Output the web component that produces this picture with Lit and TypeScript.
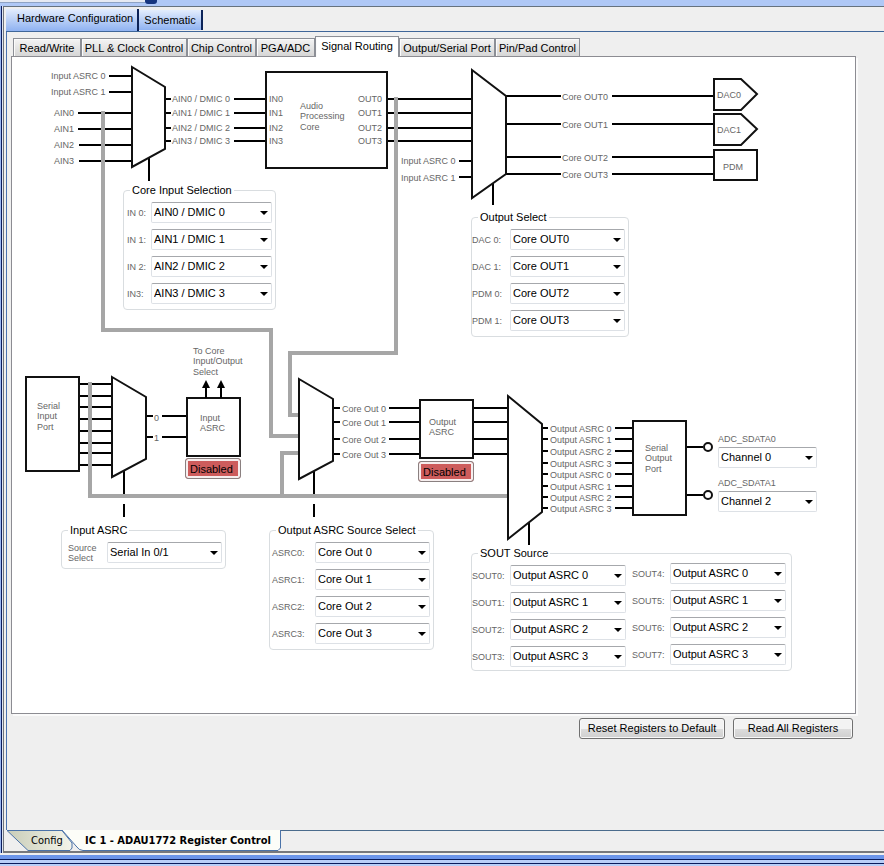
import { LitElement, html, svg, css } from "lit";
import { customElement, property, state } from "lit/decorators.js";
import { classMap } from "lit/directives/class-map.js";
import { styleMap } from "lit/directives/style-map.js";

type Wire = [number, number, number];
type Label = [number, number, string];

/* Drop-down with its caption, used in every register group. */
@customElement("reg-select")
class RegSelect extends LitElement {
  @property() label = "";
  @property({ type: Array }) options: string[] = [];
  @property({ type: Number }) index = 0;

  static styles = css`
    :host {
      display: block;
      font: 11px "Liberation Sans", Arial, sans-serif;
    }
    .row {
      display: grid;
      grid-template-columns: var(--label-width, 38px) minmax(0, 1fr);
      align-items: center;
    }
    :host(.stacked) .row {
      grid-template-columns: minmax(0, 1fr);
      row-gap: 2px;
    }
    label {
      font-size: 9px;
      line-height: 10px;
      color: #666;
    }
    :host(.stacked) label {
      line-height: 12px;
    }
    .box {
      position: relative;
      display: block;
    }
    select {
      appearance: none;
      display: block;
      box-sizing: border-box;
      width: 100%;
      height: 21px;
      margin: 0;
      padding: 0 18px 2px 2px;
      border: 1px solid #dde1e6;
      border-top-color: #a6a8ac;
      border-radius: 2px;
      background: #fff;
      color: #000;
      font: inherit;
    }
    .arrow {
      position: absolute;
      right: 4px;
      top: 9px;
      border: 4px solid transparent;
      border-top-color: #000;
      border-bottom-width: 0;
      pointer-events: none;
    }
  `;

  render() {
    return html`<div class="row">
      <label for="s">${this.label}</label>
      <span class="box">
        <select id="s">
          ${this.options.map(
            (o, i) => html`<option ?selected=${i === this.index}>${o}</option>`
          )}
        </select>
        <span class="arrow"></span>
      </span>
    </div>`;
  }
}

const AIN = ["AIN0 / DMIC 0", "AIN1 / DMIC 1", "AIN2 / DMIC 2", "AIN3 / DMIC 3"];
const CORE_OUT = ["Core OUT0", "Core OUT1", "Core OUT2", "Core OUT3"];
const CORE_SRC = ["Core Out 0", "Core Out 1", "Core Out 2", "Core Out 3"];
const ASRC = ["Output ASRC 0", "Output ASRC 1", "Output ASRC 2", "Output ASRC 3"];
const CHANNELS = ["Channel 0", "Channel 1", "Channel 2", "Channel 3"];

const TABS: [string, number][] = [
  ["Read/Write", 68],
  ["PLL & Clock Control", 106],
  ["Chip Control", 69],
  ["PGA/ADC", 59],
  ["Signal Routing", 84],
  ["Output/Serial Port", 96],
  ["Pin/Pad Control", 85],
];

const CORE_Y = [99, 113, 128, 141];
const SERIAL_IN_Y = [384, 396, 407, 419, 431, 443, 453, 465];
const ASRC_Y = [408, 422, 439, 454];
const SERIAL_OUT_Y = [428, 439, 451, 463, 474, 486, 497, 508];
const OUT_Y = [96, 124, 157, 174];

/* Horizontal wires: x1, x2, y */
const WIRES: Wire[] = [
  [109, 132, 76], [109, 132, 92],
  [78, 132, 113], [78, 132, 129], [79, 132, 145], [79, 132, 161],
  ...CORE_Y.flatMap((y): Wire[] => [[165, 171, y], [234, 266, y], [387, 472, y]]),
  [459, 472, 161], [459, 472, 177],
  ...OUT_Y.flatMap((y): Wire[] => [[506, 561, y], [612, 714, y]]),
  ...SERIAL_IN_Y.map((y): Wire => [79, 112, y]),
  [146, 153, 416], [162, 187, 416], [146, 153, 437], [162, 187, 437],
  ...ASRC_Y.flatMap((y): Wire[] => [[333, 340, y], [389, 420, y], [473, 508, y]]),
  ...SERIAL_OUT_Y.flatMap((y): Wire[] => [[542, 548, y], [615, 633, y]]),
  [686, 703, 447], [686, 703, 495],
];

const LABELS: Label[] = [
  [51, 79, "Input ASRC 0"], [51, 95, "Input ASRC 1"],
  [54, 116, "AIN0"], [54, 132, "AIN1"], [54, 148, "AIN2"], [54, 164, "AIN3"],
  ...CORE_Y.flatMap((y, i): Label[] => [
    [172, y + 3, AIN[i]], [269, y + 3, `IN${i}`], [358, y + 3, `OUT${i}`],
  ]),
  [300, 109, "Audio"], [300, 119, "Processing"], [300, 130, "Core"],
  [401, 164, "Input ASRC 0"], [401, 181, "Input ASRC 1"],
  ...OUT_Y.map((y, i): Label => [562, y + 4, CORE_OUT[i]]),
  [717, 98, "DAC0"], [717, 133, "DAC1"], [723, 170, "PDM"],
  [193, 354, "To Core"], [193, 364, "Input/Output"], [193, 375, "Select"],
  [37, 409, "Serial"], [37, 419, "Input"], [37, 430, "Port"],
  [154, 421, "0"], [154, 441, "1"],
  [200, 421, "Input"], [200, 431, "ASRC"],
  ...ASRC_Y.map((y, i): Label => [342, y + 4, CORE_SRC[i]]),
  [429, 425, "Output"], [429, 435, "ASRC"],
  ...SERIAL_OUT_Y.map((y, i): Label => [550, y + 4, ASRC[i % 4]]),
  [645, 451, "Serial"], [645, 461, "Output"], [645, 472, "Port"],
];

/* Free canvas with the signal path and the register groups. */
@customElement("signal-routing")
class SignalRouting extends LitElement {
  static styles = css`
    :host {
      display: block;
      position: relative;
      width: 844px;
      height: 656px;
      font: 11px "Liberation Sans", Arial, sans-serif;
    }
    svg {
      display: block;
    }
    .wire {
      stroke: #000;
      stroke-width: 2;
      fill: none;
    }
    .bus {
      stroke: #a6a6a6;
      stroke-width: 4;
      fill: none;
    }
    .block {
      stroke: #111;
      stroke-width: 2;
      fill: #fff;
    }
    .text {
      font-size: 9px;
      fill: #666;
    }
    fieldset {
      position: absolute;
      box-sizing: border-box;
      margin: 0;
      padding: 6px 3px 5px 0;
      border: 1px solid #d9dde0;
      border-radius: 4px;
      min-width: 0;
    }
    legend {
      margin-left: 6px;
      padding: 0 2px;
      line-height: 12px;
      color: #000;
    }
    .col {
      display: grid;
      row-gap: 6px;
      align-content: start;
    }
    .core-in {
      left: 111px;
      top: 127px;
      width: 153px;
      --label-width: 24px;
    }
    .core-in .col {
      padding-left: 3px;
    }
    .out-sel {
      left: 459px;
      top: 154px;
      width: 158px;
    }
    .in-asrc {
      left: 49px;
      top: 467px;
      width: 165px;
      --label-width: 39px;
    }
    .in-asrc .col {
      padding-left: 6px;
    }
    .out-asrc {
      left: 257px;
      top: 467px;
      width: 165px;
      --label-width: 43px;
    }
    .out-asrc .col {
      padding-left: 2px;
    }
    .sout {
      left: 459px;
      top: 490px;
      width: 321px;
      padding-top: 4px;
      padding-bottom: 3px;
    }
    .pair {
      display: grid;
      grid-template-columns: 1fr 1fr;
      column-gap: 6px;
      padding-right: 2px;
    }
    .lower {
      padding-top: 2px;
    }
    .sdata0,
    .sdata1 {
      position: absolute;
      left: 706px;
      width: 99px;
    }
    .sdata0 {
      top: 376px;
    }
    .sdata1 {
      top: 420px;
    }
    .state {
      position: absolute;
      box-sizing: border-box;
      width: 56px;
      height: 21px;
      padding: 0 0 0 4px;
      border: 1px solid #8a8080;
      border-radius: 3px;
      background: #cd5c5c;
      box-shadow: inset 0 0 0 2px #f6eeee;
      color: #000;
      font: inherit;
      text-align: left;
    }
    .state-in {
      left: 173px;
      top: 401px;
    }
    .state-out {
      left: 406px;
      top: 404px;
    }
  `;

  private rows(names: string[], options: string[]) {
    return names.map(
      (n, i) => html`<reg-select .label=${n} .options=${options} .index=${i}></reg-select>`
    );
  }

  render() {
    return html`
      <svg width="844" height="656" viewBox="12 57 844 656" aria-hidden="true">
        ${WIRES.map(([a, b, y]) => svg`<path class="wire" d="M${a} ${y}H${b}" />`)}
        <path class="wire" d="M149 157V181M493 182V205M124 470V494M124 504V517M314 470V494M314 504V517M529 521V545" />
        <path class="bus" d="M103 111V330H271V436H299" />
        <path class="bus" d="M396 97V353H290V415H299" />
        <path class="bus" d="M90 382V496H508M282 496V453H299" />
        <path class="block" d="M132 67L165 87V149L132 167Z" />
        <path class="block" d="M266 72H387V168H266Z" />
        <path class="block" d="M472 70L506 96V174L472 198Z" />
        <path class="block" d="M714 79H741L757 94L741 110H714Z" />
        <path class="block" d="M714 114H741L757 129L741 145H714Z" />
        <path class="block" d="M714 150H757V180H714Z" />
        <path class="block" d="M26 377H79V471H26Z" />
        <path class="block" d="M112 377L146 397V459L112 477Z" />
        <path class="block" d="M187 398H240V456H187Z" />
        <path class="block" d="M299 379L333 399V461L299 479Z" />
        <path class="block" d="M420 400H473V458H420Z" />
        <path class="block" d="M508 396L542 424V512L508 539Z" />
        <path class="block" d="M633 421H686V515H633Z" />
        <path class="wire" d="M206 386V398M221 386V398" />
        <path d="M206 380L210 388H202ZM221 380L225 388H217Z" />
        <circle class="block" cx="708" cy="447" r="4" />
        <circle class="block" cx="708" cy="495" r="4" />
        ${LABELS.map(([x, y, t]) => svg`<text class="text" x=${x} y=${y}>${t}</text>`)}
      </svg>

      <fieldset class="core-in">
        <legend>Core Input Selection</legend>
        <div class="col">${this.rows(["IN 0:", "IN 1:", "IN 2:", "IN3:"], AIN)}</div>
      </fieldset>
      <fieldset class="out-sel">
        <legend>Output Select</legend>
        <div class="col">${this.rows(["DAC 0:", "DAC 1:", "PDM 0:", "PDM 1:"], CORE_OUT)}</div>
      </fieldset>
      <fieldset class="in-asrc">
        <legend>Input ASRC</legend>
        <div class="col">
          ${this.rows(["Source Select"], ["Serial In 0/1", "Serial In 2/3"])}
        </div>
      </fieldset>
      <fieldset class="out-asrc">
        <legend>Output ASRC Source Select</legend>
        <div class="col">${this.rows(["ASRC0:", "ASRC1:", "ASRC2:", "ASRC3:"], CORE_SRC)}</div>
      </fieldset>
      <fieldset class="sout">
        <legend>SOUT Source</legend>
        <div class="pair">
          <div class="col lower">
            ${this.rows(["SOUT0:", "SOUT1:", "SOUT2:", "SOUT3:"], ASRC)}
          </div>
          <div class="col">
            ${this.rows(["SOUT4:", "SOUT5:", "SOUT6:", "SOUT7:"], ASRC)}
          </div>
        </div>
      </fieldset>

      <reg-select class="stacked sdata0" label="ADC_SDATA0" .options=${CHANNELS} .index=${0}></reg-select>
      <reg-select class="stacked sdata1" label="ADC_SDATA1" .options=${CHANNELS} .index=${2}></reg-select>

      <button class="state state-in">Disabled</button>
      <button class="state state-out">Disabled</button>
    `;
  }
}

@customElement("app-root")
class AppRoot extends LitElement {
  @state() private tab = 4;

  static styles = css`
    :host {
      display: flex;
      flex-direction: column;
      min-height: 100vh;
      background: #efefef;
      font: 11px "Liberation Sans", Arial, sans-serif;
      color: #000;
    }
    button {
      font: inherit;
      color: inherit;
      margin: 0;
      white-space: nowrap;
    }
    .strip {
      display: flex;
      height: 6px;
      background: #afc8f6;
    }
    .strip-pane {
      box-sizing: border-box;
      width: 145px;
      height: 3px;
      background: #e6eaf2;
      border-bottom: 1px solid #8ea3c4;
    }
    .grip {
      width: 12px;
      height: 4px;
      border-radius: 0 0 3px 3px;
      background: #16357e;
    }
    .frame {
      flex: 1;
      display: flex;
      border-left: 1px solid #9bb7f0;
    }
    .edge {
      width: 1px;
      background: #0a1c5c;
    }
    .edge-mid {
      width: 1px;
      background: #dfe6f3;
    }
    .window {
      flex: 1;
      min-width: 0;
      display: flex;
      flex-direction: column;
      border-top: 1px solid #66727e;
      border-left: 1px solid #70757c;
      border-bottom: 2px solid #77787c;
      padding-left: 2px;
    }
    .docs {
      display: flex;
      align-items: flex-start;
      height: 25px;
      padding-top: 2px;
      box-sizing: border-box;
      border-bottom: 1px solid #3f6699;
    }
    .doc {
      box-sizing: border-box;
      height: 20px;
      padding: 0 5px;
      border: 0;
      border-right: 2px solid #0c2358;
      background: linear-gradient(#e3edfd, #8fb2f1);
    }
    .doc.active {
      height: 22px;
      width: 133px;
      padding: 0 9px 4px 11px;
    }
    .doc.other {
      width: 64px;
      margin-top: 1px;
    }
    .page {
      flex: 1;
      display: flex;
      flex-direction: column;
      align-items: flex-start;
      border-left: 1px solid #4a72b0;
      padding: 4px 28px 0 4px;
    }
    .tabs {
      display: flex;
      align-items: flex-end;
      height: 20px;
      padding-left: 2px;
    }
    .tab {
      box-sizing: border-box;
      height: 18px;
      padding: 0;
      border: 1px solid #8c8f96;
      border-bottom: 0;
      background: linear-gradient(#f4f4f4, #d6d6d6);
      box-shadow: inset 1px 1px #fbfbfb;
    }
    .tab.on {
      height: 21px;
      margin-bottom: -1px;
      padding-bottom: 2px;
      background: #fff;
      position: relative;
    }
    .panel {
      align-self: stretch;
      box-sizing: border-box;
      border: 1px solid #8c8c92;
      background: #fff;
      box-shadow: 2px 2px #fafafa;
    }
    .actions {
      align-self: stretch;
      display: flex;
      justify-content: flex-end;
      gap: 8px;
      padding: 4px 3px 0 0;
    }
    .action {
      box-sizing: border-box;
      height: 21px;
      padding: 0 0 1px;
      border: 1px solid #707070;
      border-radius: 3px;
      background: linear-gradient(#f3f3f3 0 50%, #dedede 50%, #cfcfcf);
      box-shadow: inset 0 0 0 1px #f8f8f8;
    }
    .action.wide {
      width: 146px;
    }
    .action.narrow {
      width: 120px;
    }
    .sheets {
      display: flex;
      height: 21px;
      margin-left: 1px;
    }
    .sheet-line {
      flex: 1;
      border-top: 1px solid #4a6b8c;
    }
    .sheet {
      position: relative;
      height: 21px;
      padding: 0;
      border: 0;
      background: none;
      font-family: "DejaVu Sans Condensed", "DejaVu Sans", sans-serif;
    }
    .sheet svg {
      position: absolute;
      left: 0;
      top: 0;
    }
    .sheet span {
      position: relative;
    }
    .config {
      width: 66px;
      padding-left: 14px;
      margin-right: -11px;
    }
    .register {
      width: 219px;
      padding-left: 13px;
      font-weight: bold;
    }
    .base {
      height: 13px;
      background: linear-gradient(
        #efefef 0 2px,
        #6c95ea 2px 6px,
        #0a1c5c 6px 7px,
        #b9cff8 7px 10px,
        #0a1c5c 10px 11px,
        #b9cff8 11px 13px
      );
    }
  `;

  render() {
    return html`
      <div class="strip">
        <div class="strip-pane"></div>
        <div class="grip"></div>
      </div>
      <div class="frame">
        <div class="edge"></div>
        <div class="edge-mid"></div>
        <div class="window">
          <nav class="docs">
            <button class="doc active">Hardware Configuration</button>
            <button class="doc other">Schematic</button>
          </nav>
          <main class="page">
            <div class="tabs">
              ${TABS.map(
                ([t, w], i) => html`<button
                  class=${classMap({ tab: true, on: i === this.tab })}
                  style=${styleMap({ width: `${w}px` })}
                  @click=${() => (this.tab = i)}
                >${t}</button>`
              )}
            </div>
            <section class="panel"><signal-routing></signal-routing></section>
            <div class="actions">
              <button class="action wide">Reset Registers to Default</button>
              <button class="action narrow">Read All Registers</button>
            </div>
          </main>
          <nav class="sheets">
            <button class="sheet config">
              <svg width="66" height="21" aria-hidden="true">
                <defs>
                  <linearGradient id="g" x1="0" y1="0" x2="1" y2="0">
                    <stop offset="0" stop-color="#c9cdb8" />
                    <stop offset="1" stop-color="#f4f4ea" />
                  </linearGradient>
                </defs>
                <path d="M0 0.5H55L65 13V18L63 20.5H21Z" fill="url(#g)" stroke="#4a72a8" />
              </svg>
              <span>Config</span>
            </button>
            <button class="sheet register">
              <svg width="219" height="21" aria-hidden="true">
                <path d="M0 0L14 16Q17 20.5 21 20.5H216L218.5 18V0" fill="#fcfdf8" stroke="#4a72a8" />
              </svg>
              <span>IC 1 - ADAU1772 Register Control</span>
            </button>
            <div class="sheet-line"></div>
          </nav>
        </div>
      </div>
      <div class="base"></div>
    `;
  }
}
